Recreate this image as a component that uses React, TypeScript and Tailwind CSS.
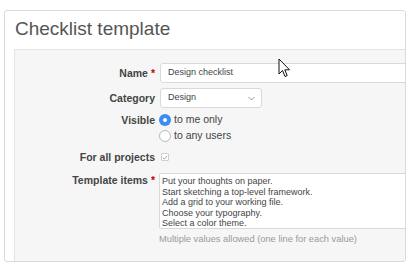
import { ReactNode } from 'react'

const items = [
  'Put your thoughts on paper.',
  'Start sketching a top-level framework.',
  'Add a grid to your working file.',
  'Choose your typography.',
  'Select a color theme.',
]

function Label({ children, required }: { children: ReactNode; required?: boolean }) {
  return (
    <div className="w-[140px] shrink-0 text-right text-[10.5px] font-bold leading-[12px] text-[#444]">
      {children}
      {required && <span className="ml-[3px] text-[#c00]">*</span>}
    </div>
  )
}

function Radio({ checked, label }: { checked?: boolean; label: string }) {
  return (
    <div className="flex h-[16px] items-center gap-[3px]">
      {checked ? (
        <span className="flex h-[12px] w-[12px] items-center justify-center rounded-full bg-[#3b8cf5]">
          <span className="h-[4px] w-[4px] rounded-full bg-white" />
        </span>
      ) : (
        <span className="h-[12px] w-[12px] rounded-full border border-[#b9b9b9] bg-white" />
      )}
      <span className="text-[10.5px] text-[#444]">{label}</span>
    </div>
  )
}

export default function App() {
  return (
    <div className="relative h-[267px] w-[415px] bg-white pl-[4px] pt-[10px] font-['Liberation_Sans',Arial,sans-serif]">
      <div className="h-[252px] w-[402px] overflow-hidden rounded-[3px] border border-[#dadada] bg-white">
        <h2 className="h-[38px] pl-[10px] pt-[7px] text-[19px] leading-[22px] text-[#555]">Checklist template</h2>

        <div className="ml-[9px] w-[520px] border border-[#e4e4e4] bg-[#f6f6f6] pt-[13px] pb-[20px]">
          {/* Name */}
          <div className="flex h-[20px] items-center gap-[5px]">
            <Label required>Name</Label>
            <div className="flex h-[20px] flex-1 items-center rounded-[3px] border border-[#d9d9d9] bg-white px-[7px] text-[9px] text-[#444]">
              Design checklist
            </div>
          </div>

          {/* Category */}
          <div className="mt-[5px] flex h-[20px] items-center gap-[5px]">
            <Label>Category</Label>
            <div className="flex h-[20px] w-[102px] items-center justify-between rounded-[3px] border border-[#d9d9d9] bg-white pl-[7px] pr-[6px] text-[9px] text-[#444]">
              Design
              <svg width="7" height="5" viewBox="0 0 7 5" fill="none" stroke="#999" strokeWidth="1">
                <path d="M0.5 1 L3.5 4 L6.5 1" />
              </svg>
            </div>
          </div>

          {/* Visible */}
          <div className="mt-[4px] flex gap-[5px]">
            <div className="flex h-[16px] items-center">
              <Label>Visible</Label>
            </div>
            <div className="-ml-[1px] flex flex-col">
              <Radio checked label="to me only" />
              <Radio label="to any users" />
            </div>
          </div>

          {/* For all projects */}
          <div className="mt-[5px] flex h-[16px] items-center gap-[5px]">
            <Label>For all projects</Label>
            <span className="ml-[1px] flex h-[8px] w-[8px] items-center justify-center rounded-[1px] border border-[#cfcfcf] bg-white">
              <svg width="6" height="5" viewBox="0 0 6 5" fill="none" stroke="#999" strokeWidth="0.9">
                <path d="M0.8 2.6 L2.3 4 L5.2 0.8" />
              </svg>
            </span>
          </div>

          {/* Template items */}
          <div className="mt-[8px] flex gap-[5px]">
            <div className="pt-[1px]">
              <Label required>Template items</Label>
            </div>
            <div className="-ml-[1px] flex-1">
              <div className="h-[56px] rounded-[2px] border border-[#d9d9d9] bg-white px-[2px] pt-[2px] text-[9px] leading-[10.5px] text-[#444]">
                {items.map((t) => (
                  <div key={t}>{t}</div>
                ))}
              </div>
              <div className="mt-[4px] text-[9.3px] leading-[12px] text-[#9a9a9a]">
                Multiple values allowed (one line for each value)
              </div>
            </div>
          </div>
        </div>
      </div>

      {/* mouse cursor */}
      <svg className="absolute left-[278px] top-[58px]" width="14" height="21" viewBox="0 0 14 21">
        <path d="M1 1 L1 16 L4.5 12.5 L7 18.5 L9.2 17.6 L6.8 11.8 L11.5 11.8 Z" fill="white" stroke="#111" strokeWidth="1" strokeLinejoin="round" />
      </svg>
    </div>
  )
}
